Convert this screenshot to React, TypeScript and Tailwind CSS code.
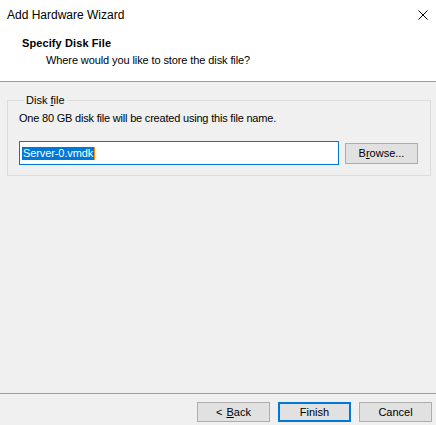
import React from 'react'

const font = { fontFamily: '"Liberation Sans", Arial, sans-serif' }

function WinButton({ children, primary = false }: { children: React.ReactNode; primary?: boolean }) {
  return (
    <button
      className={
        primary
          ? 'w-[73px] h-[20px] bg-[#e1e1e1] border-2 border-[#0078d7] text-[11px] leading-[13px] text-black flex items-center justify-center'
          : 'w-[73px] h-[20px] bg-[#e1e1e1] border border-[#adadad] text-[11px] leading-[13px] text-black flex items-center justify-center'
      }
    >
      {children}
    </button>
  )
}

export default function App() {
  return (
    <div className="w-[436px] h-[425px] flex flex-col bg-[#f0f0f0] text-black overflow-hidden" style={font}>
      {/* header */}
      <div className="h-[82px] bg-white border-b border-[#a0a0a0] flex flex-col">
        <div className="h-[30px] flex items-start justify-between pl-[7px] pr-[7px] pt-[7px]">
          <span className="text-[12px] leading-[16px]">Add Hardware Wizard</span>
          <svg width="10" height="10" viewBox="0 0 10 10" className="mt-[3px] mr-[1px]">
            <path d="M0.5 0.5 L9.5 9.5 M9.5 0.5 L0.5 9.5" stroke="#000" strokeWidth="1" fill="none" />
          </svg>
        </div>
        <div className="pl-[22px] mt-[7px] text-[11px] leading-[13px] font-bold tracking-[0.1px]">Specify Disk File</div>
        <div className="pl-[46px] mt-[4px] text-[11px] leading-[13px] tracking-[-0.1px]">
          Where would you like to store the disk file?
        </div>
      </div>

      {/* body */}
      <div className="flex-1 px-[7px] pt-[12px]">
        <fieldset className="w-[424px] h-[82px] border border-[#dcdcdc] px-[11px]">
          <legend className="ml-[5px] px-[2px] text-[11px] leading-[13px]">
            Disk <span className="underline">f</span>ile
          </legend>
          <div className="mt-[5px] text-[11px] leading-[13px] tracking-[-0.2px]">
            One 80 GB disk file will be created using this file name.
          </div>
          <div className="mt-[16px] flex items-center gap-[6px]">
            <div className="w-[320px] h-[24px] bg-white border border-[#0078d7] flex items-center pl-[2px]">
              <span className="bg-[#0078d7] text-white text-[11px] leading-[13px] px-[1px] tracking-[-0.1px]">Server-0.vmdk</span>
              <span className="w-[1px] h-[13px] bg-[#ff8c00]" />
            </div>
            <div className="w-[73px] h-[21px] bg-[#e1e1e1] border border-[#adadad] text-[11px] leading-[13px] flex items-center justify-center">
              B<span className="underline">r</span>owse...
            </div>
          </div>
        </fieldset>
      </div>

      {/* footer */}
      <div className="h-[32px] border-t border-[#a0a0a0] flex items-start justify-end gap-[8px] pt-[8px] pr-[4px]">
        <WinButton>
          <span>&lt;</span>
          <span className="ml-[4px] underline">B</span>
          <span>ack</span>
        </WinButton>
        <WinButton primary>Finish</WinButton>
        <WinButton>Cancel</WinButton>
      </div>
    </div>
  )
}
